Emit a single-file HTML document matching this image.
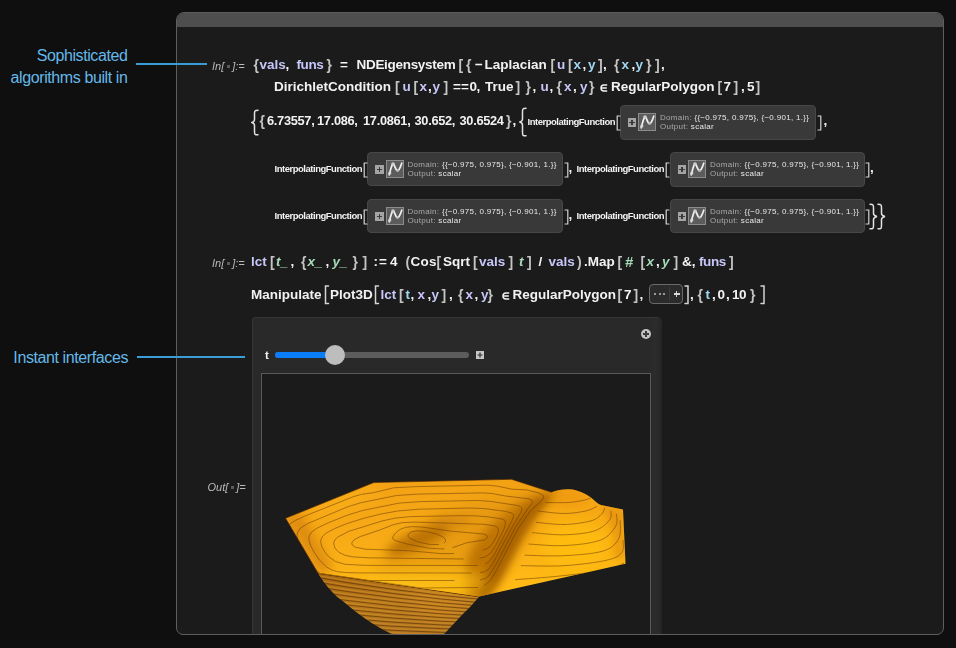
<!DOCTYPE html>
<html><head><meta charset="utf-8"><style>
*{margin:0;padding:0;box-sizing:border-box}
html,body{width:956px;height:648px;overflow:hidden;background:#0f0f0f;font-family:"Liberation Sans",sans-serif}
.win{position:absolute;left:176px;top:12px;width:768px;height:623px;background:#1b1b1b;border:1px solid #5e5e5e;border-radius:8px 8px 7px 7px;overflow:hidden}
.tbar{position:absolute;left:0;top:0;right:0;height:14px;background:#4e4e4e}
.t{position:absolute;white-space:pre;line-height:0;font-family:"Liberation Sans",sans-serif}
.dot{display:inline-block;width:3px;height:3px;background:#5a5a5a;vertical-align:2px;margin:0 2.5px}
.ann{position:absolute;color:#65b9e9;font-size:16px;line-height:21.5px;text-align:right;white-space:pre;letter-spacing:-0.4px}
.ln{position:absolute;height:2px;background:#3a9dd6}
.ifb{position:absolute;background:#393939;border:1px solid #474747;border-radius:4px}
.ifb .plus{position:absolute;left:7px;top:12px;width:8.5px;height:8.5px;background:#a4a4a4}
.ifb .plus:before{content:"";position:absolute;left:1.5px;top:3.5px;width:5.5px;height:1.6px;background:#3a3a3a}
.ifb .plus:after{content:"";position:absolute;left:3.5px;top:1.5px;width:1.6px;height:5.5px;background:#3a3a3a}
.ifb .ico{position:absolute;left:17.5px;top:6.5px}
.ifb .l1,.ifb .l2{position:absolute;left:39.5px;font-size:8px;line-height:9px;color:#e8e8e8;white-space:pre;letter-spacing:0.3px}
.ifb .l1{top:7px} .ifb .l2{top:16px}
.ifb .lab{color:#a9a9a9}
.br{position:absolute}
</style></head><body>
<div class="ann" style="left:0;top:45px;width:127.5px">Sophisticated
algorithms built in</div>

<div class="ann" style="left:0;top:347px;width:128px">Instant interfaces</div>

<div class="win"><div class="tbar"></div></div>
<div class="ln" style="left:136px;top:63px;width:71px"></div>
<div class="ln" style="left:137px;top:356px;width:108px"></div>
<div id="content" style="will-change:transform">
<div style="position:absolute;left:251.5px;top:317px;width:410px;height:317px;background:linear-gradient(90deg,#292929 0,#292929 396px,#2c2c2c 403px,#232323 410px);border-left:1px solid #353535;border-top:1px solid #353535;border-radius:4px 5px 0 0"></div>
<div style="position:absolute;left:260.5px;top:373px;width:390px;height:261px;background:#1b1b1b;border:1px solid #5a5a5a;border-bottom:none"></div>
<div style="position:absolute;left:274.5px;top:352px;width:194.5px;height:6px;border-radius:3px;background:#5c5c5c"></div>
<div style="position:absolute;left:274.5px;top:352px;width:62px;height:6px;border-radius:3px;background:#0a7df8"></div>
<div style="position:absolute;left:325px;top:345px;width:20px;height:20px;border-radius:50%;background:#bdbdbd"></div>
<svg style="position:absolute;left:476px;top:351px" width="8" height="8" viewBox="0 0 8 8"><rect width="8" height="8" fill="#c6c6c6"/><path d="M4 1.5V6.5M1.5 4H6.5" stroke="#2e2e2e" stroke-width="1.2"/></svg>
<div style="position:absolute;left:641px;top:329px;width:10px;height:10px;border-radius:50%;background:#c2c2c2"><div style="position:absolute;left:2px;top:4px;width:6px;height:2px;background:#3a3a3a"></div><div style="position:absolute;left:4px;top:2px;width:2px;height:6px;background:#3a3a3a"></div></div>
<svg style="position:absolute;left:261px;top:374px" width="389" height="260" viewBox="261 374 389 260"><defs><linearGradient id="gtop" x1="0" y1="0" x2="0.2" y2="1"><stop offset="0" stop-color="#f2a014"/><stop offset="0.5" stop-color="#f7aa16"/><stop offset="1" stop-color="#ffba16"/></linearGradient><linearGradient id="gund" x1="0" y1="0" x2="0.2" y2="1"><stop offset="0" stop-color="#a46410"/><stop offset="0.5" stop-color="#b8781c"/><stop offset="1" stop-color="#b07420"/></linearGradient><filter id="bl2" x="-80%" y="-80%" width="260%" height="260%"><feGaussianBlur stdDeviation="2"/></filter><filter id="bl3" x="-80%" y="-80%" width="260%" height="260%"><feGaussianBlur stdDeviation="3"/></filter><filter id="bl5" x="-80%" y="-80%" width="260%" height="260%"><feGaussianBlur stdDeviation="5"/></filter><filter id="bl8" x="-80%" y="-80%" width="260%" height="260%"><feGaussianBlur stdDeviation="8"/></filter><filter id="bl12" x="-80%" y="-80%" width="260%" height="260%"><feGaussianBlur stdDeviation="12"/></filter><clipPath id="ctop"><path d="M285.6,518.3 L373.8,482.6 L511.5,479.3 L551.5,492.3 C557,490 563,489 569.5,489.2 C578,489.6 586,494 591,497.5 C595,501 598,504 601,505 L623,509.5 L625.5,563.8 L479,596.6 L318,573.2 Z"/></clipPath><clipPath id="cund"><path d="M318,573.2 C326,586 334,595 344,602 C358,614 374,626 392,634 L444,634 C454,624 462,614 469,608 C473,604 476,600 479,596.6 Z"/></clipPath></defs><path d="M318,573.2 C326,586 334,595 344,602 C358,614 374,626 392,634 L444,634 C454,624 462,614 469,608 C473,604 476,600 479,596.6 Z" fill="url(#gund)"/><g clip-path="url(#cund)"><ellipse cx="440" cy="600" rx="30" ry="20" fill="#d08a20" opacity="0.5" filter="url(#bl8)"/><g fill="none"><path d="M300,572.5 Q390,589.5 490,598.5" stroke="#d8962c" stroke-width="1.6" opacity="0.45"/><path d="M300,574.3 Q390,591.3 490,600.3" stroke="#5e3408" stroke-width="0.9" opacity="0.75"/><path d="M300,577.4 Q390,593.6 490,601.8" stroke="#d8962c" stroke-width="1.6" opacity="0.45"/><path d="M300,579.2 Q390,595.4 490,603.6" stroke="#5e3408" stroke-width="0.9" opacity="0.75"/><path d="M300,582.3 Q390,597.7 490,605.1" stroke="#d8962c" stroke-width="1.6" opacity="0.45"/><path d="M300,584.1 Q390,599.5 490,606.9" stroke="#5e3408" stroke-width="0.9" opacity="0.75"/><path d="M300,587.2 Q390,601.8 490,608.4" stroke="#d8962c" stroke-width="1.6" opacity="0.45"/><path d="M300,589.0 Q390,603.6 490,610.2" stroke="#5e3408" stroke-width="0.9" opacity="0.75"/><path d="M300,592.1 Q390,605.9 490,611.7" stroke="#d8962c" stroke-width="1.6" opacity="0.45"/><path d="M300,593.9 Q390,607.7 490,613.5" stroke="#5e3408" stroke-width="0.9" opacity="0.75"/><path d="M300,597.0 Q390,610.0 490,615.0" stroke="#d8962c" stroke-width="1.6" opacity="0.45"/><path d="M300,598.8 Q390,611.8 490,616.8" stroke="#5e3408" stroke-width="0.9" opacity="0.75"/><path d="M300,601.9 Q390,614.1 490,618.3" stroke="#d8962c" stroke-width="1.6" opacity="0.45"/><path d="M300,603.7 Q390,615.9 490,620.1" stroke="#5e3408" stroke-width="0.9" opacity="0.75"/><path d="M300,606.8 Q390,618.2 490,621.6" stroke="#d8962c" stroke-width="1.6" opacity="0.45"/><path d="M300,608.6 Q390,620.0 490,623.4" stroke="#5e3408" stroke-width="0.9" opacity="0.75"/><path d="M300,611.7 Q390,622.3 490,624.9" stroke="#d8962c" stroke-width="1.6" opacity="0.45"/><path d="M300,613.5 Q390,624.1 490,626.7" stroke="#5e3408" stroke-width="0.9" opacity="0.75"/><path d="M300,616.6 Q390,626.4 490,628.2" stroke="#d8962c" stroke-width="1.6" opacity="0.45"/><path d="M300,618.4 Q390,628.2 490,630.0" stroke="#5e3408" stroke-width="0.9" opacity="0.75"/><path d="M300,621.5 Q390,630.5 490,631.5" stroke="#d8962c" stroke-width="1.6" opacity="0.45"/><path d="M300,623.3 Q390,632.3 490,633.3" stroke="#5e3408" stroke-width="0.9" opacity="0.75"/><path d="M300,626.4 Q390,634.6 490,634.8" stroke="#d8962c" stroke-width="1.6" opacity="0.45"/><path d="M300,628.2 Q390,636.4 490,636.6" stroke="#5e3408" stroke-width="0.9" opacity="0.75"/></g></g><path d="M318,573.2 L479,596.6" stroke="#4a2804" stroke-width="1.2"/><path d="M285.6,518.3 L373.8,482.6 L511.5,479.3 L551.5,492.3 C557,490 563,489 569.5,489.2 C578,489.6 586,494 591,497.5 C595,501 598,504 601,505 L623,509.5 L625.5,563.8 L479,596.6 L318,573.2 Z" fill="url(#gtop)"/><g clip-path="url(#ctop)"><path d="M283,516 L318,575 L334,568 L302,514 Z" fill="#d4820a" opacity="0.7" filter="url(#bl5)"/><path d="M375,570 C390,545 420,522 460,508 C490,498 520,494 548,492 L530,525 C510,545 490,575 478,598 C450,590 420,585 390,582 Z" fill="#d88a0c" opacity="0.5" filter="url(#bl8)"/><ellipse cx="418" cy="540" rx="34" ry="9" transform="rotate(-24 418 540)" fill="#b06806" opacity="0.8" filter="url(#bl5)"/><ellipse cx="450" cy="522" rx="20" ry="6" transform="rotate(-5 450 522)" fill="#c47a0c" opacity="0.5" filter="url(#bl5)"/><path d="M540,493 L562,490 C552,498 545,506 538,514 C530,526 522,540 514,556 C506,572 498,586 488,598 L468,598 C464,580 464,562 474,545 C486,528 505,512 520,503 C528,498 534,495 540,493 Z" fill="#b46a06" opacity="0.8" filter="url(#bl5)"/><path d="M552,494 C545,503 536,514 528,526 C520,540 512,556 504,572 C498,584 492,592 486,598 L476,598 C480,585 486,570 494,555 C502,540 512,525 524,512 C533,503 542,497 552,494 Z" fill="#985604" opacity="0.55" filter="url(#bl3)"/><path d="M600,505 L623,510 L625,560 L612,555 C615,535 610,518 600,505 Z" fill="#dc8a10" opacity="0.55" filter="url(#bl3)"/><ellipse cx="572" cy="497" rx="18" ry="8" fill="#ee9410" opacity="0.6" filter="url(#bl5)"/><ellipse cx="575" cy="545" rx="34" ry="24" fill="#ffbe10" opacity="0.85" filter="url(#bl8)"/><ellipse cx="425" cy="582" rx="62" ry="11" fill="#ffc414" opacity="0.85" filter="url(#bl8)"/><ellipse cx="345" cy="500" rx="40" ry="10" transform="rotate(-20 345 500)" fill="#fcb41c" opacity="0.55" filter="url(#bl8)"/><g stroke="#6a3a06" stroke-width="0.75" fill="none" opacity="0.7"><path d="M478.0,587.5 421.0,588.0 318.0,573.2 289.9,526.0 289.5,524.1 295.3,520.5 304.5,516.2 353.0,496.8 361.5,494.3 373.5,492.7 393.5,487.8 416.5,486.6 488.0,485.2 496.5,486.0 512.0,489.2 526.5,489.9 538.5,492.8 543.4,495.5 543.7,497.0 542.8,499.0 538.7,503.5 530.5,510.6 517.5,529.5 497.0,569.3 490.5,580.5 484.5,585.3"/><path d="M454.5,580.5 369.0,580.5 320.0,573.5 316.0,570.0 298.0,539.5 297.1,536.0 297.4,532.5 300.6,528.0 307.7,523.5 347.5,506.9 360.5,502.8 396.5,495.5 418.0,494.1 482.5,492.9 492.0,493.5 505.5,496.0 529.0,498.8 532.0,500.5 532.5,502.0 531.9,503.5 527.8,508.5 515.0,528.0 496.0,564.7 489.0,575.6 485.5,578.4 480.0,580.0"/><path d="M471.5,573.0 357.5,572.9 344.5,572.5 336.5,571.5 331.5,569.8 326.6,567.0 319.4,560.0 314.6,553.0 310.8,546.0 309.0,540.5 309.0,536.5 311.6,532.0 317.3,528.0 328.5,522.7 347.0,515.3 362.5,510.5 399.0,503.1 420.5,501.6 477.5,500.5 490.0,501.3 517.6,505.5 520.4,506.5 521.5,507.7 521.7,509.5 520.9,512.5 512.1,527.0 492.0,564.8 488.5,569.1 484.5,571.8 480.0,572.7"/><path d="M478.0,565.5 366.5,565.4 345.0,564.3 335.5,561.5 328.5,556.5 325.0,552.3 322.2,547.5 320.9,543.5 320.8,540.0 322.8,536.0 327.1,532.5 334.8,528.5 346.5,523.7 365.0,517.9 381.5,513.9 397.5,511.0 419.0,509.2 470.5,508.0 485.5,508.7 506.2,511.5 512.0,513.2 513.3,514.5 513.5,516.5 512.1,520.5 494.0,555.0 489.5,561.2 485.0,564.3"/><path d="M463.5,559.0 369.0,557.8 353.0,556.9 345.0,555.3 339.0,552.4 334.9,548.0 333.6,543.0 334.8,540.0 337.5,537.2 348.5,531.4 382.0,521.0 395.0,518.1 410.5,516.6 459.0,515.7 475.5,515.8 488.5,516.9 502.0,519.0 504.3,520.0 505.3,521.5 505.2,525.0 503.8,529.5 495.5,545.9 490.5,553.1 485.5,556.9 479.5,558.1"/><path d="M454.0,553.5 441.0,553.6 408.5,550.7 365.0,549.2 354.9,547.0 352.2,545.0 351.7,543.0 354.0,539.9 360.4,536.5 379.0,530.3 393.0,524.8 402.0,522.7 414.5,522.1 484.0,524.3 495.0,526.0 497.5,527.3 498.4,529.0 498.0,532.5 496.3,537.0 493.0,542.8 490.0,546.5 487.0,548.7 483.0,550.0"/><path d="M444.5,549.0 429.5,548.3 407.2,544.0 395.0,540.5 393.0,539.0 392.7,537.0 395.4,533.0 400.0,529.4 405.5,527.4 412.5,526.6 422.5,527.1 450.5,531.1 483.4,534.0 486.2,535.0 487.4,536.5 486.6,538.5 484.4,540.0 466.5,542.8 452.5,547.7"/><path d="M439.0,544.6 429.5,544.4 417.5,541.8 410.0,538.3 408.3,536.5 408.0,534.5 411.0,531.9 417.5,530.8 426.5,531.6 436.5,534.0 443.3,537.0 445.7,540.0 445.4,541.5 443.9,543.0"/><path d="M545.4,502.5 C549.2,502.5 561.5,502.9 568.0,502.5 C574.5,502.1 580.6,500.9 584.7,500.0 C588.8,499.1 591.1,497.5 592.4,497.0"/><path d="M537.8,511.0 C542.2,511.4 556.0,513.5 564.0,513.5 C572.0,513.5 580.5,512.1 586.0,510.9 C591.5,509.7 595.2,507.1 597.0,506.3"/><path d="M536.0,522.3 C540.7,522.7 554.9,524.7 564.0,524.5 C573.1,524.3 584.6,522.6 590.9,520.9 C597.2,519.1 599.4,516.2 601.7,514.0 C604.0,511.8 604.3,508.8 604.8,507.8"/><path d="M532.0,532.6 C537.3,533.0 553.7,535.1 564.0,534.8 C574.3,534.5 586.4,533.4 594.0,531.0 C601.6,528.6 606.6,523.6 609.4,520.2 C612.2,516.9 610.7,512.5 611.0,510.9"/><path d="M528.4,544.0 C534.3,544.3 552.0,546.2 564.0,545.6 C576.0,545.0 591.6,543.4 600.2,540.2 C608.8,537.0 612.9,530.7 615.6,526.3 C618.3,521.9 616.4,516.0 616.5,514.0"/><path d="M524.6,555.2 C531.2,555.3 550.9,556.4 564.0,555.7 C577.1,555.0 594.1,553.8 603.2,551.0 C612.3,548.2 615.9,543.8 618.7,538.7 C621.5,533.6 620.0,523.3 620.2,520.2"/><path d="M520.9,565.6 C528.1,565.6 549.8,566.6 564.0,565.7 C578.2,564.8 596.7,562.5 606.3,560.3 C615.9,558.1 619.0,556.0 621.8,552.6 C624.6,549.2 622.8,542.1 623.0,540.0"/><path d="M515.2,579.7 C522.7,579.1 544.9,577.6 560.0,576.0 C575.1,574.4 595.3,572.2 606.0,570.0 C616.7,567.8 621.0,564.2 624.0,563.0"/></g></g><path d="M318,573.2 L285.6,518.3 L373.8,482.6 L511.5,479.3 L551.5,492.3" stroke="#4a1e02" stroke-width="1" fill="none" opacity="0.6"/></svg>
<div class="ifb" style="left:619.5px;top:105px;width:196.5px;height:34.5px">
<div class="plus"></div>
<svg class="ico" width="18" height="18" viewBox="0 0 18 18"><rect x="0.5" y="0.5" width="17" height="17" fill="#5c5c5c" stroke="#8c8c8c"/><path d="M3 15.5 C4 12 5 7 6.5 4.5 C8 2.5 9 8 10.5 10 C12 12 14 9 16 2.5" stroke="#f0f0f0" stroke-width="1.7" fill="none"/><circle cx="3.8" cy="13" r="1.6" fill="#d8d8d8"/><circle cx="7" cy="4" r="1.8" fill="#cfcfcf"/><circle cx="11.5" cy="10.5" r="1.3" fill="#bbb"/></svg>
<div class="l1"><span class="lab">Domain:</span> {{−0.975, 0.975}, {−0.901, 1.}}</div>
<div class="l2"><span class="lab">Output:</span> scalar</div>
</div><div class="ifb" style="left:367px;top:152px;width:196px;height:34px">
<div class="plus"></div>
<svg class="ico" width="18" height="18" viewBox="0 0 18 18"><rect x="0.5" y="0.5" width="17" height="17" fill="#5c5c5c" stroke="#8c8c8c"/><path d="M3 15.5 C4 12 5 7 6.5 4.5 C8 2.5 9 8 10.5 10 C12 12 14 9 16 2.5" stroke="#f0f0f0" stroke-width="1.7" fill="none"/><circle cx="3.8" cy="13" r="1.6" fill="#d8d8d8"/><circle cx="7" cy="4" r="1.8" fill="#cfcfcf"/><circle cx="11.5" cy="10.5" r="1.3" fill="#bbb"/></svg>
<div class="l1"><span class="lab">Domain:</span> {{−0.975, 0.975}, {−0.901, 1.}}</div>
<div class="l2"><span class="lab">Output:</span> scalar</div>
</div><div class="ifb" style="left:669.5px;top:152px;width:195.5px;height:34.5px">
<div class="plus"></div>
<svg class="ico" width="18" height="18" viewBox="0 0 18 18"><rect x="0.5" y="0.5" width="17" height="17" fill="#5c5c5c" stroke="#8c8c8c"/><path d="M3 15.5 C4 12 5 7 6.5 4.5 C8 2.5 9 8 10.5 10 C12 12 14 9 16 2.5" stroke="#f0f0f0" stroke-width="1.7" fill="none"/><circle cx="3.8" cy="13" r="1.6" fill="#d8d8d8"/><circle cx="7" cy="4" r="1.8" fill="#cfcfcf"/><circle cx="11.5" cy="10.5" r="1.3" fill="#bbb"/></svg>
<div class="l1"><span class="lab">Domain:</span> {{−0.975, 0.975}, {−0.901, 1.}}</div>
<div class="l2"><span class="lab">Output:</span> scalar</div>
</div><div class="ifb" style="left:367px;top:199px;width:196px;height:34px">
<div class="plus"></div>
<svg class="ico" width="18" height="18" viewBox="0 0 18 18"><rect x="0.5" y="0.5" width="17" height="17" fill="#5c5c5c" stroke="#8c8c8c"/><path d="M3 15.5 C4 12 5 7 6.5 4.5 C8 2.5 9 8 10.5 10 C12 12 14 9 16 2.5" stroke="#f0f0f0" stroke-width="1.7" fill="none"/><circle cx="3.8" cy="13" r="1.6" fill="#d8d8d8"/><circle cx="7" cy="4" r="1.8" fill="#cfcfcf"/><circle cx="11.5" cy="10.5" r="1.3" fill="#bbb"/></svg>
<div class="l1"><span class="lab">Domain:</span> {{−0.975, 0.975}, {−0.901, 1.}}</div>
<div class="l2"><span class="lab">Output:</span> scalar</div>
</div><div class="ifb" style="left:669.5px;top:199px;width:195.5px;height:34px">
<div class="plus"></div>
<svg class="ico" width="18" height="18" viewBox="0 0 18 18"><rect x="0.5" y="0.5" width="17" height="17" fill="#5c5c5c" stroke="#8c8c8c"/><path d="M3 15.5 C4 12 5 7 6.5 4.5 C8 2.5 9 8 10.5 10 C12 12 14 9 16 2.5" stroke="#f0f0f0" stroke-width="1.7" fill="none"/><circle cx="3.8" cy="13" r="1.6" fill="#d8d8d8"/><circle cx="7" cy="4" r="1.8" fill="#cfcfcf"/><circle cx="11.5" cy="10.5" r="1.3" fill="#bbb"/></svg>
<div class="l1"><span class="lab">Domain:</span> {{−0.975, 0.975}, {−0.901, 1.}}</div>
<div class="l2"><span class="lab">Output:</span> scalar</div>
</div>
<svg class="br" style="left:250.5px;top:108.5px" width="9" height="27" viewBox="0 0 9 27"><path d="M7 1.2 C3.5 1.2 3.5 2.5 3.5 5 L3.5 10.5 C3.5 12.7 1 13.5 1 13.5 C1 13.5 3.5 14.3 3.5 16.5 L3.5 22 C3.5 25.5 3.5 25.8 7 25.8" stroke="#e2e2e2" stroke-width="1.5" fill="none" stroke-linecap="round"/></svg>
<svg class="br" style="left:518.5px;top:106.5px" width="9" height="30" viewBox="0 0 9 30"><path d="M7 1.2 C3.5 1.2 3.5 2.5 3.5 5 L3.5 12.0 C3.5 14.2 1 15.0 1 15.0 C1 15.0 3.5 15.8 3.5 18.0 L3.5 25 C3.5 28.5 3.5 28.8 7 28.8" stroke="#e2e2e2" stroke-width="1.5" fill="none" stroke-linecap="round"/></svg>
<svg class="br" style="left:615.5px;top:114.5px" width="6" height="16" viewBox="0 0 6 16"><path d="M4 1 L1.2 1 L1.2 15 L4 15" stroke="#d4d4d4" stroke-width="1.2" fill="none" stroke-linecap="round"/></svg>
<svg class="br" style="left:816.5px;top:114.5px" width="6" height="16" viewBox="0 0 6 16"><path d="M1 1 L3.8 1 L3.8 15 L1 15" stroke="#d4d4d4" stroke-width="1.2" fill="none" stroke-linecap="round"/></svg>
<svg class="br" style="left:363px;top:161.5px" width="6" height="16" viewBox="0 0 6 16"><path d="M4 1 L1.2 1 L1.2 15 L4 15" stroke="#d4d4d4" stroke-width="1.2" fill="none" stroke-linecap="round"/></svg>
<svg class="br" style="left:564px;top:161.5px" width="6" height="16" viewBox="0 0 6 16"><path d="M1 1 L3.8 1 L3.8 15 L1 15" stroke="#d4d4d4" stroke-width="1.2" fill="none" stroke-linecap="round"/></svg>
<svg class="br" style="left:665px;top:161.5px" width="6" height="16" viewBox="0 0 6 16"><path d="M4 1 L1.2 1 L1.2 15 L4 15" stroke="#d4d4d4" stroke-width="1.2" fill="none" stroke-linecap="round"/></svg>
<svg class="br" style="left:865px;top:161.5px" width="6" height="16" viewBox="0 0 6 16"><path d="M1 1 L3.8 1 L3.8 15 L1 15" stroke="#d4d4d4" stroke-width="1.2" fill="none" stroke-linecap="round"/></svg>
<svg class="br" style="left:363px;top:208.5px" width="6" height="16" viewBox="0 0 6 16"><path d="M4 1 L1.2 1 L1.2 15 L4 15" stroke="#d4d4d4" stroke-width="1.2" fill="none" stroke-linecap="round"/></svg>
<svg class="br" style="left:564px;top:208.5px" width="6" height="16" viewBox="0 0 6 16"><path d="M1 1 L3.8 1 L3.8 15 L1 15" stroke="#d4d4d4" stroke-width="1.2" fill="none" stroke-linecap="round"/></svg>
<svg class="br" style="left:665px;top:208.5px" width="6" height="16" viewBox="0 0 6 16"><path d="M4 1 L1.2 1 L1.2 15 L4 15" stroke="#d4d4d4" stroke-width="1.2" fill="none" stroke-linecap="round"/></svg>
<svg class="br" style="left:865px;top:208.5px" width="6" height="16" viewBox="0 0 6 16"><path d="M1 1 L3.8 1 L3.8 15 L1 15" stroke="#d4d4d4" stroke-width="1.2" fill="none" stroke-linecap="round"/></svg>
<svg class="br" style="left:869px;top:202.5px" width="9" height="27" viewBox="0 0 9 27"><path d="M1 1.2 C4.5 1.2 4.5 2.5 4.5 5 L4.5 10.5 C4.5 12.7 8 13.5 8 13.5 C8 13.5 4.5 14.3 4.5 16.5 L4.5 22 C4.5 25.5 4.5 25.8 1 25.8" stroke="#e2e2e2" stroke-width="1.5" fill="none" stroke-linecap="round"/></svg>
<svg class="br" style="left:876.5px;top:202.5px" width="9" height="27" viewBox="0 0 9 27"><path d="M1 1.2 C4.5 1.2 4.5 2.5 4.5 5 L4.5 10.5 C4.5 12.7 8 13.5 8 13.5 C8 13.5 4.5 14.3 4.5 16.5 L4.5 22 C4.5 25.5 4.5 25.8 1 25.8" stroke="#e2e2e2" stroke-width="1.5" fill="none" stroke-linecap="round"/></svg>
<svg class="br" style="left:324px;top:285px" width="6.5" height="19.5" viewBox="0 0 6.5 19.5"><path d="M4.5 1 L1.5 1 L1.5 18.5 L4.5 18.5" stroke="#d4d4d4" stroke-width="1.5" fill="none" stroke-linecap="round"/></svg>
<svg class="br" style="left:374px;top:285px" width="6.5" height="19.5" viewBox="0 0 6.5 19.5"><path d="M4.5 1 L1.5 1 L1.5 18.5 L4.5 18.5" stroke="#d4d4d4" stroke-width="1.5" fill="none" stroke-linecap="round"/></svg>
<svg class="br" style="left:683.5px;top:285px" width="6.5" height="19.5" viewBox="0 0 6.5 19.5"><path d="M1 1 L4.0 1 L4.0 18.5 L1 18.5" stroke="#d4d4d4" stroke-width="1.5" fill="none" stroke-linecap="round"/></svg>
<svg class="br" style="left:760px;top:285px" width="6.5" height="19.5" viewBox="0 0 6.5 19.5"><path d="M1 1 L4.0 1 L4.0 18.5 L1 18.5" stroke="#d4d4d4" stroke-width="1.5" fill="none" stroke-linecap="round"/></svg>
<div style="position:absolute;left:648.5px;top:283.5px;width:34.5px;height:20px;border:1.3px solid #6a6a6a;border-radius:4px;background:#2b2b2b"><div style="position:absolute;left:19px;top:2px;width:1px;height:14px;background:#3c3c3c"></div><div style="position:absolute;left:4.5px;top:8.5px;width:12px;height:2px;background:repeating-linear-gradient(90deg,#9a9a9a 0 2px,transparent 2px 4.5px)"></div><div style="position:absolute;left:24px;top:8.7px;width:6px;height:1.6px;background:#d8d8d8"></div><div style="position:absolute;left:26.2px;top:6.5px;width:1.6px;height:6px;background:#d8d8d8"></div></div>
<span class="t" style="left:212.0px;top:64.7px;font-size:11px;font-weight:normal;font-style:italic;color:#bababa;">In[<i class="dot"></i>]:=</span>
<span class="t" style="left:253.5px;top:64.7px;font-size:14px;font-weight:bold;font-style:normal;color:#c4c4c4;">{</span>
<span class="t" style="left:259.5px;top:64.7px;font-size:13.5px;font-weight:bold;font-style:normal;color:#c6c6f8;">vals</span>
<span class="t" style="left:285.5px;top:64.7px;font-size:13.5px;font-weight:bold;font-style:normal;color:#f2f2f2;">,</span>
<span class="t" style="left:296.5px;top:64.7px;font-size:13.5px;font-weight:bold;font-style:normal;color:#c6c6f8;letter-spacing:-0.4px;">funs</span>
<span class="t" style="left:326.5px;top:64.7px;font-size:14px;font-weight:bold;font-style:normal;color:#c4c4c4;">}</span>
<span class="t" style="left:340.0px;top:64.7px;font-size:13.5px;font-weight:bold;font-style:normal;color:#f2f2f2;">=</span>
<span class="t" style="left:356.5px;top:64.7px;font-size:13.5px;font-weight:bold;font-style:normal;color:#f2f2f2;letter-spacing:-0.3px;">NDEigensystem</span>
<span class="t" style="left:458.5px;top:64.7px;font-size:14px;font-weight:bold;font-style:normal;color:#c4c4c4;">[</span>
<span class="t" style="left:466.0px;top:64.7px;font-size:14px;font-weight:bold;font-style:normal;color:#c4c4c4;">{</span>
<span class="t" style="left:475.0px;top:64.7px;font-size:13.5px;font-weight:bold;font-style:normal;color:#f2f2f2;">−</span>
<span class="t" style="left:484.5px;top:64.7px;font-size:13.5px;font-weight:bold;font-style:normal;color:#f2f2f2;">Laplacian</span>
<span class="t" style="left:550.5px;top:64.7px;font-size:14px;font-weight:bold;font-style:normal;color:#c4c4c4;">[</span>
<span class="t" style="left:557.0px;top:64.7px;font-size:13.5px;font-weight:bold;font-style:normal;color:#c6c6f8;">u</span>
<span class="t" style="left:568.0px;top:64.7px;font-size:14px;font-weight:bold;font-style:normal;color:#c4c4c4;">[</span>
<span class="t" style="left:573.5px;top:64.7px;font-size:13.5px;font-weight:bold;font-style:normal;color:#9fd6f2;">x</span>
<span class="t" style="left:582.5px;top:64.7px;font-size:13.5px;font-weight:bold;font-style:normal;color:#f2f2f2;">,</span>
<span class="t" style="left:588.0px;top:64.7px;font-size:13.5px;font-weight:bold;font-style:normal;color:#9fd6f2;">y</span>
<span class="t" style="left:598.0px;top:64.7px;font-size:14px;font-weight:bold;font-style:normal;color:#c4c4c4;">]</span>
<span class="t" style="left:603.0px;top:64.7px;font-size:13.5px;font-weight:bold;font-style:normal;color:#f2f2f2;">,</span>
<span class="t" style="left:614.0px;top:64.7px;font-size:14px;font-weight:bold;font-style:normal;color:#c4c4c4;">{</span>
<span class="t" style="left:621.5px;top:64.7px;font-size:13.5px;font-weight:bold;font-style:normal;color:#9fd6f2;">x</span>
<span class="t" style="left:631.5px;top:64.7px;font-size:13.5px;font-weight:bold;font-style:normal;color:#f2f2f2;">,</span>
<span class="t" style="left:635.5px;top:64.7px;font-size:13.5px;font-weight:bold;font-style:normal;color:#9fd6f2;">y</span>
<span class="t" style="left:646.0px;top:64.7px;font-size:14px;font-weight:bold;font-style:normal;color:#c4c4c4;">}</span>
<span class="t" style="left:655.0px;top:64.7px;font-size:14px;font-weight:bold;font-style:normal;color:#c4c4c4;">]</span>
<span class="t" style="left:661.0px;top:64.7px;font-size:13.5px;font-weight:bold;font-style:normal;color:#f2f2f2;">,</span>
<span class="t" style="left:274.0px;top:86.7px;font-size:13.5px;font-weight:bold;font-style:normal;color:#f2f2f2;">DirichletCondition</span>
<span class="t" style="left:395.0px;top:86.7px;font-size:14px;font-weight:bold;font-style:normal;color:#c4c4c4;">[</span>
<span class="t" style="left:402.5px;top:86.7px;font-size:13.5px;font-weight:bold;font-style:normal;color:#c6c6f8;">u</span>
<span class="t" style="left:413.5px;top:86.7px;font-size:14px;font-weight:bold;font-style:normal;color:#c4c4c4;">[</span>
<span class="t" style="left:419.5px;top:86.7px;font-size:13.5px;font-weight:bold;font-style:normal;color:#c6c6f8;">x</span>
<span class="t" style="left:428.0px;top:86.7px;font-size:13.5px;font-weight:bold;font-style:normal;color:#f2f2f2;">,</span>
<span class="t" style="left:432.5px;top:86.7px;font-size:13.5px;font-weight:bold;font-style:normal;color:#c6c6f8;">y</span>
<span class="t" style="left:443.5px;top:86.7px;font-size:14px;font-weight:bold;font-style:normal;color:#c4c4c4;">]</span>
<span class="t" style="left:453.0px;top:86.7px;font-size:13.5px;font-weight:bold;font-style:normal;color:#f2f2f2;">==</span>
<span class="t" style="left:469.5px;top:86.7px;font-size:13.5px;font-weight:bold;font-style:normal;color:#f2f2f2;">0</span>
<span class="t" style="left:476.5px;top:86.7px;font-size:13.5px;font-weight:bold;font-style:normal;color:#f2f2f2;">,</span>
<span class="t" style="left:485.0px;top:86.7px;font-size:13.5px;font-weight:bold;font-style:normal;color:#f2f2f2;">True</span>
<span class="t" style="left:515.5px;top:86.7px;font-size:14px;font-weight:bold;font-style:normal;color:#c4c4c4;">]</span>
<span class="t" style="left:525.5px;top:86.7px;font-size:14px;font-weight:bold;font-style:normal;color:#c4c4c4;">}</span>
<span class="t" style="left:532.5px;top:86.7px;font-size:13.5px;font-weight:bold;font-style:normal;color:#f2f2f2;">,</span>
<span class="t" style="left:540.5px;top:86.7px;font-size:13.5px;font-weight:bold;font-style:normal;color:#c6c6f8;">u</span>
<span class="t" style="left:549.5px;top:86.7px;font-size:13.5px;font-weight:bold;font-style:normal;color:#f2f2f2;">,</span>
<span class="t" style="left:556.5px;top:86.7px;font-size:14px;font-weight:bold;font-style:normal;color:#c4c4c4;">{</span>
<span class="t" style="left:564.0px;top:86.7px;font-size:13.5px;font-weight:bold;font-style:normal;color:#c6c6f8;">x</span>
<span class="t" style="left:573.0px;top:86.7px;font-size:13.5px;font-weight:bold;font-style:normal;color:#f2f2f2;">,</span>
<span class="t" style="left:580.0px;top:86.7px;font-size:13.5px;font-weight:bold;font-style:normal;color:#c6c6f8;">y</span>
<span class="t" style="left:589.0px;top:86.7px;font-size:14px;font-weight:bold;font-style:normal;color:#c4c4c4;">}</span>
<svg class="br" style="left:598.5px;top:83.5px" width="9" height="8" viewBox="0 0 9 8"><path d="M8.2 1 H5 A3 3 0 0 0 5 7 H8.2 M1.5 4 H7.8" stroke="#f2f2f2" stroke-width="1.5" fill="none"/></svg>
<span class="t" style="left:611.0px;top:86.7px;font-size:13.5px;font-weight:bold;font-style:normal;color:#f2f2f2;">RegularPolygon</span>
<span class="t" style="left:717.5px;top:86.7px;font-size:14px;font-weight:bold;font-style:normal;color:#c4c4c4;">[</span>
<span class="t" style="left:723.5px;top:86.7px;font-size:13.5px;font-weight:bold;font-style:normal;color:#f2f2f2;">7</span>
<span class="t" style="left:733.5px;top:86.7px;font-size:14px;font-weight:bold;font-style:normal;color:#c4c4c4;">]</span>
<span class="t" style="left:741.0px;top:86.7px;font-size:13.5px;font-weight:bold;font-style:normal;color:#f2f2f2;">,</span>
<span class="t" style="left:747.0px;top:86.7px;font-size:13.5px;font-weight:bold;font-style:normal;color:#f2f2f2;">5</span>
<span class="t" style="left:755.5px;top:86.7px;font-size:14px;font-weight:bold;font-style:normal;color:#c4c4c4;">]</span>
<span class="t" style="left:259.5px;top:121.0px;font-size:14px;font-weight:bold;font-style:normal;color:#c4c4c4;">{</span>
<span class="t" style="left:267.0px;top:121.0px;font-size:12.8px;font-weight:bold;font-style:normal;color:#f2f2f2;letter-spacing:-0.3px;">6.73557,</span>
<span class="t" style="left:317.0px;top:121.0px;font-size:12.8px;font-weight:bold;font-style:normal;color:#f2f2f2;letter-spacing:-0.3px;">17.086,</span>
<span class="t" style="left:363.0px;top:121.0px;font-size:12.8px;font-weight:bold;font-style:normal;color:#f2f2f2;letter-spacing:-0.3px;">17.0861,</span>
<span class="t" style="left:414.5px;top:121.0px;font-size:12.8px;font-weight:bold;font-style:normal;color:#f2f2f2;letter-spacing:-0.3px;">30.652,</span>
<span class="t" style="left:459.5px;top:121.0px;font-size:12.8px;font-weight:bold;font-style:normal;color:#f2f2f2;letter-spacing:-0.3px;">30.6524</span>
<span class="t" style="left:506.0px;top:121.0px;font-size:14px;font-weight:bold;font-style:normal;color:#c4c4c4;">}</span>
<span class="t" style="left:512.5px;top:121.0px;font-size:13.5px;font-weight:bold;font-style:normal;color:#f2f2f2;">,</span>
<span class="t" style="left:527.5px;top:121.8px;font-size:9.5px;font-weight:bold;font-style:normal;color:#f2f2f2;letter-spacing:-0.48px;">InterpolatingFunction</span>
<span class="t" style="left:823.5px;top:121.0px;font-size:13.5px;font-weight:bold;font-style:normal;color:#f2f2f2;">,</span>
<span class="t" style="left:274.5px;top:168.8px;font-size:9.5px;font-weight:bold;font-style:normal;color:#f2f2f2;letter-spacing:-0.48px;">InterpolatingFunction</span>
<span class="t" style="left:568.5px;top:168.0px;font-size:13.5px;font-weight:bold;font-style:normal;color:#f2f2f2;">,</span>
<span class="t" style="left:576.5px;top:168.8px;font-size:9.5px;font-weight:bold;font-style:normal;color:#f2f2f2;letter-spacing:-0.48px;">InterpolatingFunction</span>
<span class="t" style="left:870.0px;top:168.0px;font-size:13.5px;font-weight:bold;font-style:normal;color:#f2f2f2;">,</span>
<span class="t" style="left:274.5px;top:215.8px;font-size:9.5px;font-weight:bold;font-style:normal;color:#f2f2f2;letter-spacing:-0.48px;">InterpolatingFunction</span>
<span class="t" style="left:568.5px;top:215.0px;font-size:13.5px;font-weight:bold;font-style:normal;color:#f2f2f2;">,</span>
<span class="t" style="left:576.5px;top:215.8px;font-size:9.5px;font-weight:bold;font-style:normal;color:#f2f2f2;letter-spacing:-0.48px;">InterpolatingFunction</span>
<span class="t" style="left:212.0px;top:262.0px;font-size:11px;font-weight:normal;font-style:italic;color:#bababa;">In[<i class="dot"></i>]:=</span>
<span class="t" style="left:251.0px;top:262.0px;font-size:13.5px;font-weight:bold;font-style:normal;color:#c6c6f8;">lct</span>
<span class="t" style="left:270.0px;top:262.0px;font-size:14px;font-weight:bold;font-style:normal;color:#c4c4c4;">[</span>
<span class="t" style="left:276.0px;top:262.0px;font-size:13.5px;font-weight:bold;font-style:italic;color:#a6dcb8;">t_</span>
<span class="t" style="left:290.5px;top:262.0px;font-size:13.5px;font-weight:bold;font-style:normal;color:#f2f2f2;">,</span>
<span class="t" style="left:301.0px;top:262.0px;font-size:14px;font-weight:bold;font-style:normal;color:#c4c4c4;">{</span>
<span class="t" style="left:307.5px;top:262.0px;font-size:13.5px;font-weight:bold;font-style:italic;color:#a6dcb8;">x_</span>
<span class="t" style="left:325.5px;top:262.0px;font-size:13.5px;font-weight:bold;font-style:normal;color:#f2f2f2;">,</span>
<span class="t" style="left:332.5px;top:262.0px;font-size:13.5px;font-weight:bold;font-style:italic;color:#a6dcb8;">y_</span>
<span class="t" style="left:352.5px;top:262.0px;font-size:14px;font-weight:bold;font-style:normal;color:#c4c4c4;">}</span>
<span class="t" style="left:362.5px;top:262.0px;font-size:14px;font-weight:bold;font-style:normal;color:#c4c4c4;">]</span>
<span class="t" style="left:373.5px;top:262.0px;font-size:13.5px;font-weight:bold;font-style:normal;color:#f2f2f2;letter-spacing:1px;">:=</span>
<span class="t" style="left:390.0px;top:262.0px;font-size:13.5px;font-weight:bold;font-style:normal;color:#f2f2f2;">4</span>
<span class="t" style="left:405.5px;top:262.0px;font-size:14px;font-weight:bold;font-style:normal;color:#c4c4c4;">(</span>
<span class="t" style="left:410.5px;top:262.0px;font-size:13.5px;font-weight:bold;font-style:normal;color:#f2f2f2;letter-spacing:0.3px;">Cos</span>
<span class="t" style="left:436.5px;top:262.0px;font-size:14px;font-weight:bold;font-style:normal;color:#c4c4c4;">[</span>
<span class="t" style="left:443.0px;top:262.0px;font-size:13.5px;font-weight:bold;font-style:normal;color:#f2f2f2;">Sqrt</span>
<span class="t" style="left:473.0px;top:262.0px;font-size:14px;font-weight:bold;font-style:normal;color:#c4c4c4;">[</span>
<span class="t" style="left:479.0px;top:262.0px;font-size:13.5px;font-weight:bold;font-style:normal;color:#c6c6f8;">vals</span>
<span class="t" style="left:508.5px;top:262.0px;font-size:14px;font-weight:bold;font-style:normal;color:#c4c4c4;">]</span>
<span class="t" style="left:519.0px;top:262.0px;font-size:13.5px;font-weight:bold;font-style:italic;color:#a6dcb8;">t</span>
<span class="t" style="left:527.0px;top:262.0px;font-size:14px;font-weight:bold;font-style:normal;color:#c4c4c4;">]</span>
<span class="t" style="left:538.5px;top:262.0px;font-size:13.5px;font-weight:bold;font-style:normal;color:#f2f2f2;">/</span>
<span class="t" style="left:548.5px;top:262.0px;font-size:13.5px;font-weight:bold;font-style:normal;color:#c6c6f8;">vals</span>
<span class="t" style="left:577.0px;top:262.0px;font-size:14px;font-weight:bold;font-style:normal;color:#c4c4c4;">)</span>
<span class="t" style="left:584.0px;top:262.0px;font-size:13.5px;font-weight:bold;font-style:normal;color:#f2f2f2;">.Map</span>
<span class="t" style="left:617.5px;top:262.0px;font-size:14px;font-weight:bold;font-style:normal;color:#c4c4c4;">[</span>
<span class="t" style="left:625.0px;top:262.0px;font-size:14.5px;font-weight:bold;font-style:italic;color:#a6dcb8;">#</span>
<span class="t" style="left:640.5px;top:262.0px;font-size:14px;font-weight:bold;font-style:normal;color:#c4c4c4;">[</span>
<span class="t" style="left:646.5px;top:262.0px;font-size:13.5px;font-weight:bold;font-style:italic;color:#a6dcb8;">x</span>
<span class="t" style="left:656.0px;top:262.0px;font-size:13.5px;font-weight:bold;font-style:normal;color:#f2f2f2;">,</span>
<span class="t" style="left:662.0px;top:262.0px;font-size:13.5px;font-weight:bold;font-style:italic;color:#a6dcb8;">y</span>
<span class="t" style="left:673.5px;top:262.0px;font-size:14px;font-weight:bold;font-style:normal;color:#c4c4c4;">]</span>
<span class="t" style="left:682.0px;top:262.0px;font-size:13.5px;font-weight:bold;font-style:normal;color:#f2f2f2;">&amp;,</span>
<span class="t" style="left:699.0px;top:262.0px;font-size:13.5px;font-weight:bold;font-style:normal;color:#c6c6f8;letter-spacing:-0.4px;">funs</span>
<span class="t" style="left:729.0px;top:262.0px;font-size:14px;font-weight:bold;font-style:normal;color:#c4c4c4;">]</span>
<span class="t" style="left:251.0px;top:294.5px;font-size:13.5px;font-weight:bold;font-style:normal;color:#f2f2f2;">Manipulate</span>
<span class="t" style="left:330.0px;top:294.5px;font-size:13.5px;font-weight:bold;font-style:normal;color:#f2f2f2;">Plot3D</span>
<span class="t" style="left:380.5px;top:294.5px;font-size:13.5px;font-weight:bold;font-style:normal;color:#c6c6f8;">lct</span>
<span class="t" style="left:399.0px;top:294.5px;font-size:14px;font-weight:bold;font-style:normal;color:#c4c4c4;">[</span>
<span class="t" style="left:405.5px;top:294.5px;font-size:13.5px;font-weight:bold;font-style:normal;color:#9fd6f2;">t</span>
<span class="t" style="left:410.5px;top:294.5px;font-size:13.5px;font-weight:bold;font-style:normal;color:#f2f2f2;">,</span>
<span class="t" style="left:417.5px;top:294.5px;font-size:13.5px;font-weight:bold;font-style:normal;color:#c6c6f8;">x</span>
<span class="t" style="left:427.5px;top:294.5px;font-size:13.5px;font-weight:bold;font-style:normal;color:#f2f2f2;">,</span>
<span class="t" style="left:431.5px;top:294.5px;font-size:13.5px;font-weight:bold;font-style:normal;color:#c6c6f8;">y</span>
<span class="t" style="left:441.5px;top:294.5px;font-size:14px;font-weight:bold;font-style:normal;color:#c4c4c4;">]</span>
<span class="t" style="left:449.0px;top:294.5px;font-size:13.5px;font-weight:bold;font-style:normal;color:#f2f2f2;">,</span>
<span class="t" style="left:458.0px;top:294.5px;font-size:14px;font-weight:bold;font-style:normal;color:#c4c4c4;">{</span>
<span class="t" style="left:465.5px;top:294.5px;font-size:13.5px;font-weight:bold;font-style:normal;color:#c6c6f8;">x</span>
<span class="t" style="left:474.5px;top:294.5px;font-size:13.5px;font-weight:bold;font-style:normal;color:#f2f2f2;">,</span>
<span class="t" style="left:481.0px;top:294.5px;font-size:13.5px;font-weight:bold;font-style:normal;color:#c6c6f8;">y</span>
<span class="t" style="left:487.5px;top:294.5px;font-size:14px;font-weight:bold;font-style:normal;color:#c4c4c4;">}</span>
<svg class="br" style="left:500.5px;top:291.5px" width="9" height="8" viewBox="0 0 9 8"><path d="M8.2 1 H5 A3 3 0 0 0 5 7 H8.2 M1.5 4 H7.8" stroke="#f2f2f2" stroke-width="1.5" fill="none"/></svg>
<span class="t" style="left:512.5px;top:294.5px;font-size:13.5px;font-weight:bold;font-style:normal;color:#f2f2f2;">RegularPolygon</span>
<span class="t" style="left:617.5px;top:294.5px;font-size:14px;font-weight:bold;font-style:normal;color:#c4c4c4;">[</span>
<span class="t" style="left:624.0px;top:294.5px;font-size:13.5px;font-weight:bold;font-style:normal;color:#f2f2f2;">7</span>
<span class="t" style="left:633.5px;top:294.5px;font-size:14px;font-weight:bold;font-style:normal;color:#c4c4c4;">]</span>
<span class="t" style="left:639.5px;top:294.5px;font-size:13.5px;font-weight:bold;font-style:normal;color:#f2f2f2;">,</span>
<span class="t" style="left:690.0px;top:294.5px;font-size:13.5px;font-weight:bold;font-style:normal;color:#f2f2f2;">,</span>
<span class="t" style="left:697.5px;top:294.5px;font-size:14px;font-weight:bold;font-style:normal;color:#c4c4c4;">{</span>
<span class="t" style="left:705.5px;top:294.5px;font-size:13.5px;font-weight:bold;font-style:normal;color:#9fd6f2;">t</span>
<span class="t" style="left:712.0px;top:294.5px;font-size:13.5px;font-weight:bold;font-style:normal;color:#f2f2f2;">,</span>
<span class="t" style="left:717.5px;top:294.5px;font-size:13.5px;font-weight:bold;font-style:normal;color:#f2f2f2;">0</span>
<span class="t" style="left:726.0px;top:294.5px;font-size:13.5px;font-weight:bold;font-style:normal;color:#f2f2f2;">,</span>
<span class="t" style="left:732.0px;top:294.5px;font-size:13.5px;font-weight:bold;font-style:normal;color:#f2f2f2;letter-spacing:-0.5px;">10</span>
<span class="t" style="left:750.0px;top:294.5px;font-size:14px;font-weight:bold;font-style:normal;color:#c4c4c4;">}</span>
<span class="t" style="left:207.5px;top:485.5px;font-size:11px;font-weight:normal;font-style:italic;color:#bababa;">Out[<i class="dot"></i>]=</span>
<span class="t" style="left:265.0px;top:355.3px;font-size:11.5px;font-weight:bold;font-style:normal;color:#f2f2f2;">t</span>
</div>
</body></html>
